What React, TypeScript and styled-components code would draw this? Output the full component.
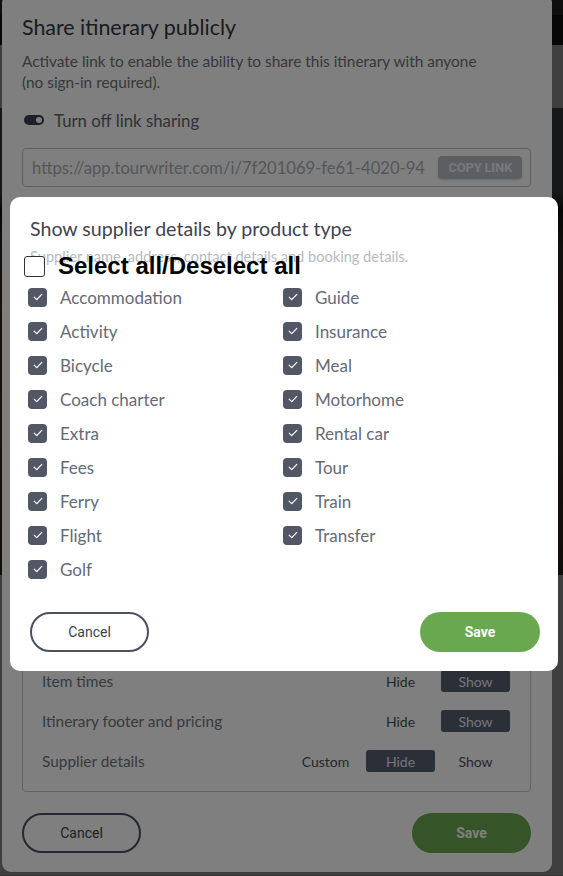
import React from "react";
import styled, { createGlobalStyle } from "styled-components";

const Global = createGlobalStyle`
  html, body { margin: 0; padding: 0; }
  body { background: #ffffff; font-family: "Lato", "Open Sans", sans-serif; overflow: hidden; }
  * { box-sizing: border-box; }
`;

const Page = styled.div`
  height: 876px;
  display: flex;
  flex-direction: column;
  background: #ffffff;
`;
const TopStrip = styled.div`height: 15px; background: #383838;`;
const NavBar = styled.div`height: 30px; background: #1c1c1c;`;
const WhiteBand = styled.div`height: 63px; background: #ffffff;`;
const Hero = styled.div`
  height: 467px;
  background: linear-gradient(180deg, #586266 0%, #586266 18%, #1c1a18 22%, #4a403a 30%, #5a4a3e 70%, #3e3428 100%);
`;
const Content = styled.div`
  flex: 1;
  background: #ffffff;
  border-bottom: 1px solid #d0d0d0;
`;

const Overlay = styled.div`
  position: fixed;
  inset: 0;
  background: rgba(0, 0, 0, 0.5);
`;

const ShareModal = styled.div`
  position: fixed;
  left: 2px;
  top: -6px;
  width: 550px;
  height: 878px;
  background: #ffffff;
  border-radius: 9px;
  padding: 19px 21px 19px 20px;
  display: flex;
  flex-direction: column;
  color: #5f6570;
`;

const ShareTitle = styled.h2`
  margin: 0;
  font-size: 21.4px;
  font-weight: 400;
  line-height: 28px;
  color: #34373e;
`;
const ShareText = styled.p`
  margin: 10px 0 0;
  max-width: 462px;
  font-size: 15.4px;
  line-height: 21px;
  color: #6c7078;
`;
const ToggleRow = styled.div`
  display: flex;
  align-items: center;
  gap: 10px;
  margin: 17px 0 0 2px;
  height: 20px;
  font-size: 16.8px;
  color: #60646c;
`;
const Toggle = styled.span`
  width: 20px;
  height: 10px;
  border-radius: 5px;
  background: #3a3f4b;
  position: relative;
  &::after {
    content: "";
    position: absolute;
    right: 2px;
    top: 2px;
    width: 6px;
    height: 6px;
    border-radius: 50%;
    background: #ffffff;
  }
`;
const LinkBox = styled.div`
  margin-top: 18px;
  height: 39px;
  border: 1px solid #b8bcc4;
  border-radius: 4px;
  display: flex;
  align-items: center;
  justify-content: space-between;
  padding: 0 8px 0 9px;
`;
const LinkText = styled.span`
  font-size: 16.6px;
  color: #a9adb5;
  white-space: nowrap;
  overflow: hidden;
`;
const CopyButton = styled.span`
  flex: none;
  margin-left: 6px;
  background: #b9bdc5;
  color: #eef0f3;
  font-family: "Roboto", "Liberation Sans", sans-serif;
  font-weight: 700;
  font-size: 13px;
  letter-spacing: -0.2px;
  height: 23px;
  padding: 0 10px;
  border-radius: 4px;
  display: flex;
  align-items: center;
  box-shadow: 0 1px 2px rgba(0,0,0,0.15);
`;

const OptionsBox = styled.div`
  margin-top: auto;
  border: 1px solid #c4c7cd;
  border-radius: 4px;
  padding: 10px 20px 10px 19px;
  display: flex;
  flex-direction: column;
`;
const OptionRow = styled.div`
  height: 40px;
  display: flex;
  align-items: center;
  justify-content: space-between;
  font-size: 15.4px;
  color: #70747c;
`;
const Segments = styled.div`
  display: flex;
  gap: 6px;
`;
const Segment = styled.span<{ $active?: boolean }>`
  width: 69px;
  height: 22px;
  border-radius: 3px;
  display: flex;
  align-items: center;
  justify-content: center;
  font-size: 14px;
  color: ${(p) => (p.$active ? "#e8eaee" : "#4a4e58")};
  background: ${(p) => (p.$active ? "#565e70" : "transparent")};
`;

const Footer = styled.div`
  margin-top: 21px;
  display: flex;
  justify-content: space-between;
  align-items: center;
`;
const OutlineButton = styled.button<{ $w: number }>`
  width: ${(p) => p.$w}px;
  height: 40px;
  border-radius: 20px;
  border: 2px solid #4a5060;
  background: transparent;
  font-family: "Roboto", "Liberation Sans", sans-serif;
  font-size: 14px;
  color: #3a3f4b;
  padding: 0;
`;
const GreenButton = styled.button<{ $w: number }>`
  width: ${(p) => p.$w}px;
  height: 40px;
  border-radius: 20px;
  border: none;
  background: #6aa84f;
  font-family: "Roboto", "Liberation Sans", sans-serif;
  font-weight: 700;
  font-size: 14px;
  color: #ffffff;
  padding: 0;
`;

const SupplierModal = styled.div`
  position: fixed;
  left: 10px;
  top: 197px;
  width: 548px;
  height: 474px;
  background: #ffffff;
  border-radius: 10px;
  padding: 19px 18px 19px 20px;
  display: flex;
  flex-direction: column;
`;
const SupplierTitle = styled.h3`
  margin: 0;
  font-size: 19.6px;
  font-weight: 400;
  line-height: 26px;
  color: #3f434d;
`;
const SupplierSub = styled.p`
  margin: 6px 0 0;
  font-size: 14.6px;
  line-height: 18px;
  color: #b6bac2;
`;
const SelectAll = styled.label`
  display: flex;
  align-items: center;
  gap: 13px;
  margin: -12px 0 0 -6px;
  height: 24px;
  font-family: "Liberation Sans", Arial, sans-serif;
  font-weight: 700;
  font-size: 24px;
  color: #000000;
`;
const EmptyBox = styled.span`
  width: 21px;
  height: 21px;
  border: 1px solid #333;
  border-radius: 3px;
  background: #fff;
`;
const Grid = styled.div`
  margin: 2px 0 0 -2px;
  display: grid;
  grid-auto-flow: column;
  grid-template-rows: repeat(9, 34px);
  grid-template-columns: 255px 1fr;
`;
const Item = styled.div`
  display: flex;
  align-items: center;
  gap: 13px;
  font-size: 17px;
  color: #656a74;
`;
const CheckBox = styled.span`
  width: 19px;
  height: 19px;
  border-radius: 4px;
  background: #525766;
  display: flex;
  align-items: center;
  justify-content: center;
`;
const ModalFooter = styled.div`
  margin-top: auto;
  display: flex;
  justify-content: space-between;
`;

const left = ["Accommodation", "Activity", "Bicycle", "Coach charter", "Extra", "Fees", "Ferry", "Flight", "Golf"];
const right = ["Guide", "Insurance", "Meal", "Motorhome", "Rental car", "Tour", "Train", "Transfer"];

const Check = () => (
  <svg width="10" height="8" viewBox="0 0 10 8" fill="none">
    <path d="M1.2 4.2 L3.8 6.6 L8.8 1.4" stroke="#ffffff" strokeWidth="1.2" strokeLinecap="round" strokeLinejoin="round" />
  </svg>
);

export default function App() {
  return (
    <>
      <Global />
      <Page>
        <TopStrip />
        <NavBar />
        <WhiteBand />
        <Hero />
        <Content />
      </Page>
      <Overlay />
      <ShareModal>
        <ShareTitle>Share itinerary publicly</ShareTitle>
        <ShareText>
          Activate link to enable the ability to share this itinerary with anyone (no sign-in required).
        </ShareText>
        <ToggleRow>
          <Toggle />
          Turn off link sharing
        </ToggleRow>
        <LinkBox>
          <LinkText>https://app.tourwriter.com/i/7f201069-fe61-4020-94</LinkText>
          <CopyButton>COPY LINK</CopyButton>
        </LinkBox>
        <OptionsBox>
          <OptionRow>
            Item times
            <Segments>
              <Segment>Hide</Segment>
              <Segment $active>Show</Segment>
            </Segments>
          </OptionRow>
          <OptionRow>
            Itinerary footer and pricing
            <Segments>
              <Segment>Hide</Segment>
              <Segment $active>Show</Segment>
            </Segments>
          </OptionRow>
          <OptionRow>
            Supplier details
            <Segments>
              <Segment>Custom</Segment>
              <Segment $active>Hide</Segment>
              <Segment>Show</Segment>
            </Segments>
          </OptionRow>
        </OptionsBox>
        <Footer>
          <OutlineButton $w={119}>Cancel</OutlineButton>
          <GreenButton $w={119}>Save</GreenButton>
        </Footer>
      </ShareModal>
      <Overlay />
      <SupplierModal>
        <SupplierTitle>Show supplier details by product type</SupplierTitle>
        <SupplierSub>Supplier name, address, contact details and booking details.</SupplierSub>
        <SelectAll>
          <EmptyBox />
          Select all/Deselect all
        </SelectAll>
        <Grid>
          {[...left, ...right].map((name) => (
            <Item key={name}>
              <CheckBox>
                <Check />
              </CheckBox>
              {name}
            </Item>
          ))}
        </Grid>
        <ModalFooter>
          <OutlineButton $w={119}>Cancel</OutlineButton>
          <GreenButton $w={120}>Save</GreenButton>
        </ModalFooter>
      </SupplierModal>
    </>
  );
}
